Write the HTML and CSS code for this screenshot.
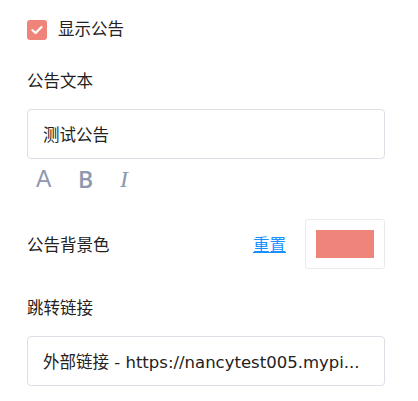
FILE: index.html
```html
<!DOCTYPE html>
<html lang="zh">
<head>
<meta charset="utf-8">
<link rel="stylesheet" href="styles.css">
</head>
<body>
<div class="panel">
  <label class="check-row">
    <span class="checkbox">
      <svg width="12" height="10" viewBox="0 0 12 10"><path d="M1.5 5.2 L4.6 8 L10.5 2" fill="none" stroke="#fff" stroke-width="2.2" stroke-linecap="round" stroke-linejoin="round"/></svg>
    </span>
    <span class="check-label">显示公告</span>
  </label>

  <div class="label">公告文本</div>
  <div class="input">测试公告</div>
  <div class="toolbar">
    <span class="tool tool-a">A</span>
    <span class="tool tool-b">B</span>
    <span class="tool tool-i">I</span>
  </div>

  <div class="color-row">
    <span class="color-label">公告背景色</span>
    <a class="reset">重置</a>
    <span class="swatch-box"><span class="swatch"></span></span>
  </div>

  <div class="label label-link">跳转链接</div>
  <div class="input">外部链接 - https://nancytest005.mypi...</div>
</div>
</body>
</html>
```

FILE: styles.css
```css
html, body {
  margin: 0;
  padding: 0;
  background: #fff;
}
body {
  font-family: "DejaVu Sans", "Noto Sans CJK SC", sans-serif;
  font-size: 16.5px;
  color: #222;
}
.panel {
  width: 358px;
  padding: 20px 0 0 27px;
}
.check-row {
  display: flex;
  align-items: center;
  height: 20px;
  gap: 11px;
}
.checkbox {
  width: 20px;
  height: 20px;
  border-radius: 3px;
  background: #ef857a;
  display: flex;
  align-items: center;
  justify-content: center;
}
.check-label {
  line-height: 20px;
}
.label {
  margin-top: 31px;
  line-height: 22px;
}
.input {
  margin-top: 16px;
  box-sizing: border-box;
  height: 50px;
  border: 1px solid #dcdfe6;
  border-radius: 4px;
  padding: 0 15px;
  display: flex;
  align-items: center;
  color: #222;
  white-space: nowrap;
}
.toolbar {
  display: flex;
  align-items: center;
  height: 24px;
  margin-top: 8px;
  padding-left: 9px;
}
.tool {
  color: #8e98ae;
  font-size: 23px;
  line-height: 24px;
  width: 42px;
}
.tool-a {
  font-family: "Liberation Sans", sans-serif;
}
.tool-b {
  font-family: "Open Sans", sans-serif;
  font-weight: 600;
}
.tool-i {
  font-family: "Liberation Serif", serif;
  font-style: italic;
  font-size: 24px;
}
.color-row {
  margin-top: 28px;
  display: flex;
  align-items: center;
  height: 50px;
}
.color-label {
  flex: 1;
}
.reset {
  color: #1890ff;
  text-decoration: underline;
  margin-right: 19px;
  cursor: pointer;
}
.swatch-box {
  box-sizing: border-box;
  width: 80px;
  height: 50px;
  border: 1px solid #e9e9f0;
  border-radius: 3px;
  padding: 10px;
  display: flex;
}
.swatch {
  flex: 1;
  background: #ef857a;
}
.label-link {
  margin-top: 29px;
}
```
